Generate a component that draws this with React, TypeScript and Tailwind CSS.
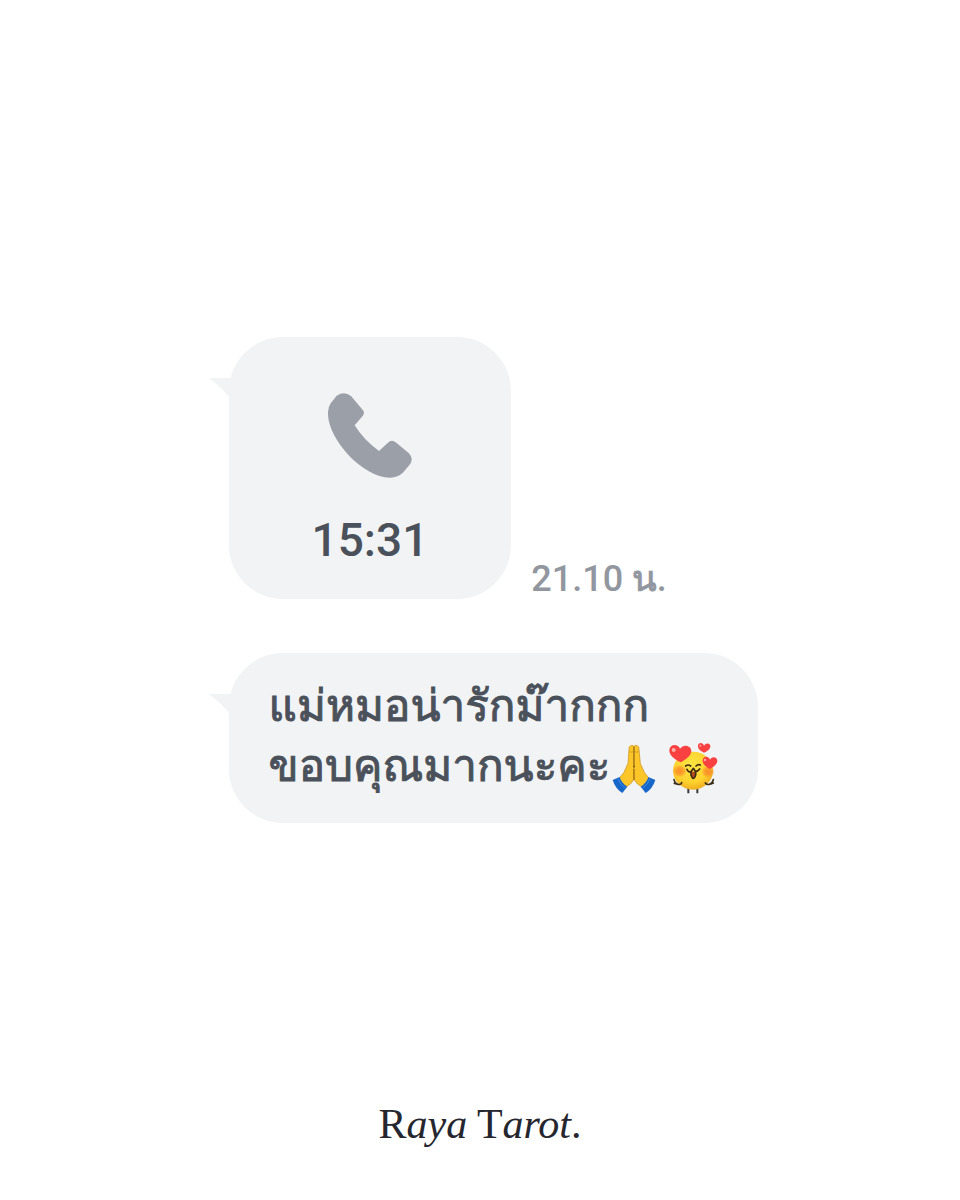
import type { ReactNode } from "react";
import clsx from "clsx";

interface BubbleProps {
  children: ReactNode;
  className?: string;
}

function Bubble({ children, className = "" }: BubbleProps) {
  return (
    <div className={clsx("relative rounded-[54px] bg-[#f1f3f5]", className)}>
      <svg
        viewBox="0 0 22 22"
        className="absolute top-10 -left-5 size-[22px] fill-[#f1f3f5]"
        aria-hidden="true"
      >
        <path d="M0 1h22v21C16 15 9 8 0 1Z" />
      </svg>
      {children}
    </div>
  );
}

function PhoneIcon() {
  return (
    <svg viewBox="54 39 252 255" className="h-[85px] w-[84px]" aria-hidden="true">
      <path
        d="M80 47Q103 32 123 48L159 91Q165 100 158 108L134 136Q161 180 207 213L233 189Q245 177 257 187L296 219Q312 235 300 253L280 277Q264 293 240 293C158 292 57 180 54 104Q53 84 62 70Z"
        fill="#9b9fa7"
      />
    </svg>
  );
}

function PrayingHands() {
  return (
    <svg viewBox="32 26 132 150" className="h-[50px] w-11" role="img" aria-label="Folded hands">
      <g stroke="#c88b16" strokeWidth="2" strokeLinejoin="round">
        <path
          d="M98 34Q96 28 88 31Q82 33 83 42L80 84L68 111L50 133L69 158Q91 147 98 132Z"
          fill="#fcc629"
        />
        <path
          d="M98 34Q100 28 108 31Q114 33 113 42L117 84L129 111L146 133L127 158Q105 147 98 132Z"
          fill="#fcc629"
        />
        <path d="M84 49Q90 52 96 49M100 49Q106 52 112 49" fill="none" />
      </g>
      <path d="M98 34V93M98 101V134" stroke="#8b6418" strokeWidth="3" />
      <circle cx="98" cy="94" r="2.5" fill="#6d4b17" />
      <path d="M34 134L55 125Q60 143 78 154L63 173Q42 160 34 134Z" fill="#1767c9" />
      <path d="M162 134L141 125Q136 143 118 154L133 173Q154 160 162 134Z" fill="#1767c9" />
      <path d="M50 130Q57 149 73 159M146 130Q139 149 123 159" stroke="#3c8ae3" strokeWidth="3" fill="none" />
    </svg>
  );
}

function LoveFace() {
  return (
    <svg viewBox="196 22 150 156" className="h-[52px] w-[50px]" role="img" aria-label="Smiling face with hearts">
      <defs>
        <radialGradient id="face" cx="45%" cy="35%" r="65%">
          <stop offset="0" stopColor="#ffe543" />
          <stop offset="0.7" stopColor="#fed22e" />
          <stop offset="1" stopColor="#efae20" />
        </radialGradient>
        <radialGradient id="cheek">
          <stop offset="0" stopColor="#fb8c29" />
          <stop offset="0.55" stopColor="#fb8c29" stopOpacity="0.7" />
          <stop offset="1" stopColor="#fb8c29" stopOpacity="0" />
        </radialGradient>
      </defs>
      <path d="M257 160V176M284 160V176" stroke="#413936" strokeWidth="6" />
      <ellipse cx="271" cy="108" rx="60" ry="57" fill="url(#face)" />
      <ellipse cx="231" cy="109" rx="22" ry="19" fill="url(#cheek)" />
      <ellipse cx="316" cy="111" rx="20" ry="19" fill="url(#cheek)" />
      <path d="M265 111V121Q272 142 279 121V111Z" fill="#b84b1e" />
      <g stroke="#3b2d17" strokeWidth="5" strokeLinecap="round" strokeLinejoin="round" fill="none">
        <path d="M249 94Q257 88 264 94M280 94Q286 88 293 91" />
        <path d="M253 104Q258 115 266 110L272 101L278 110Q285 111 291 103" />
        <path d="M265 111V121Q272 142 279 121V111" />
        <path d="M214 135Q217 147 226 149Q235 151 237 144M215 146L222 148M332 135Q329 147 320 149Q312 151 308 145M332 145L325 148" />
      </g>
      <g fill="#fa4141">
        <path d="M235 83C216 75 198 60 200 45C202 28 226 26 232 42C243 26 267 33 266 50C265 65 248 75 235 83Z" />
        <path d="M304 54C294 50 284 42 286 32C288 22 301 23 304 33C311 22 325 26 323 37C321 46 312 51 304 54Z" />
        <path d="M321 103C309 96 298 87 300 76C302 63 318 64 322 75C330 62 345 68 344 80C342 91 330 98 321 103Z" />
      </g>
      <g fill="#ffb1a7">
        <circle cx="213" cy="46" r="6" />
        <circle cx="293" cy="33" r="3" />
        <circle cx="307" cy="76" r="3.5" />
      </g>
    </svg>
  );
}

export default function App() {
  return (
    <div className="flex min-h-screen flex-col bg-white font-[Roboto,Loma,'Noto_Sans_Thai_Looped',Garuda,Waree,Umpush,sans-serif] font-medium">
      <main className="mx-auto flex w-fit flex-col gap-[54px] pt-[337px] pl-[27px]">
        <div className="flex items-end gap-5">
          <Bubble className="flex flex-col items-center px-[83px] pt-14 pb-7">
            <PhoneIcon />
            <p className="mt-8 text-[46px] leading-[61px] text-[#4b515a]">15:31</p>
          </Bubble>
          <time className="text-[36px] leading-10 whitespace-nowrap text-[#92979f]" dateTime="21:10">
            21.10 <span className="[-webkit-text-stroke:1px]">น</span>.
          </time>
        </div>
        <Bubble className="px-10 pt-[23px] pb-[27px] text-[44px] leading-[60px] text-[#4b515a] [-webkit-text-stroke:1px]">
          <p>แม่หมอน่ารักม๊ากกก</p>
          <p className="flex items-center">
            ขอบคุณมากนะคะ
            <span className="mt-1 ml-0.5 flex items-end gap-3">
              <PrayingHands />
              <LoveFace />
            </span>
          </p>
        </Bubble>
      </main>
      <footer className="mt-auto pb-12 text-center font-['Liberation_Serif',serif] text-[42px] leading-[56px] font-normal text-[#25262e]">
        R<i>aya</i> T<i>arot</i>.
      </footer>
    </div>
  );
}
